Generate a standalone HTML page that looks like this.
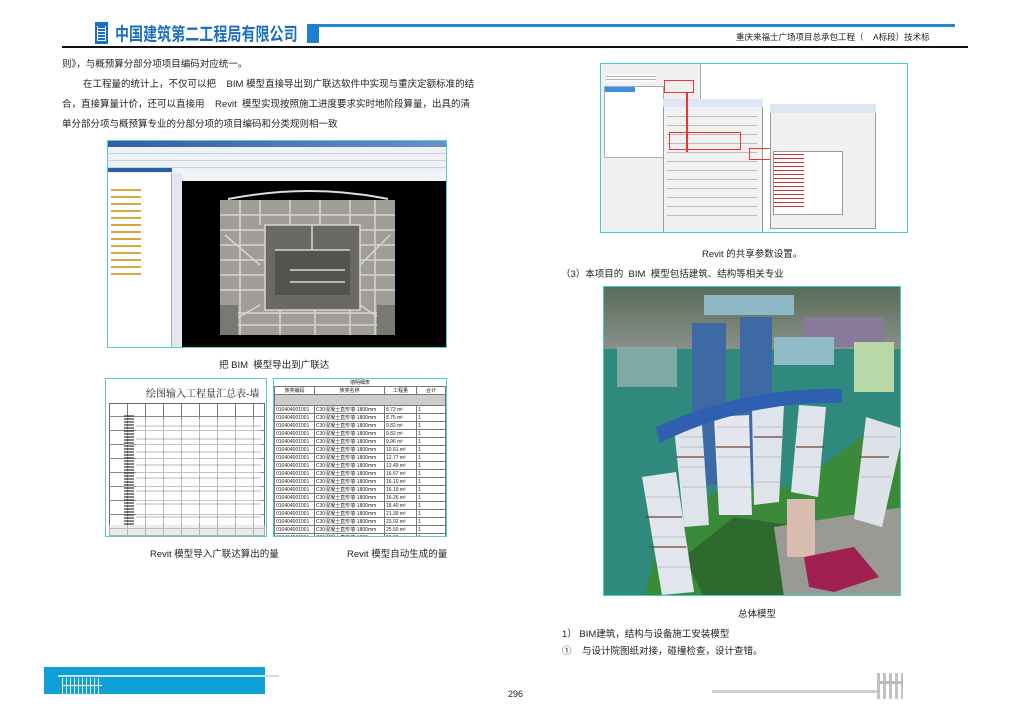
<!DOCTYPE html>
<html><head><meta charset="utf-8"><style>
*{margin:0;padding:0;box-sizing:border-box}
body{width:1024px;height:724px;background:#fff;position:relative;overflow:hidden;font-family:"Liberation Sans","Noto Sans CJK SC",sans-serif;color:#222}
.a{position:absolute}
.t{position:absolute;font-size:9.5px;white-space:nowrap;color:#222}
table{border-collapse:collapse;font-size:5px}
td{border:1px solid #777;height:7.6px;padding:0 1px;white-space:nowrap;overflow:hidden}
</style></head><body>
<!-- header -->
<div class="a" style="left:95px;top:22px;width:13px;height:22px;background:#1d6fbf"></div>
<div class="a" style="left:97px;top:26px;width:9px;height:15px;border:1px solid #fff;border-width:0 1px;background:repeating-linear-gradient(#1d6fbf 0 2px,#fff 2px 3px)"></div>
<div class="t" style="left:115px;top:24px;font-size:14px;font-weight:bold;color:#1d6fbf;letter-spacing:0.05px;transform:scaleY(1.3);transform-origin:0 50%">中国建筑第二工程局有限公司</div>
<div class="a" style="left:307px;top:24px;width:12px;height:19px;background:#1d7fd0"></div>
<div class="a" style="left:319px;top:24px;width:636px;height:3px;background:#1d8ad6"></div>
<div class="t" style="left:736px;top:31px;font-size:8.5px">重庆来福士广场项目总承包工程（&nbsp;&nbsp;&nbsp;&nbsp;A标段）技术标</div>
<div class="a" style="left:62px;top:46px;width:906px;height:1.5px;background:#111"></div>
<!-- left text -->
<div class="t" style="left:62px;top:56px">则》，与概预算分部分项项目编码对应统一。</div>
<div class="t" style="left:83px;top:76px">在工程量的统计上，不仅可以把&nbsp;&nbsp;&nbsp;&nbsp;BIM 模型直接导出到广联达软件中实现与重庆定额标准的结</div>
<div class="t" style="left:62px;top:96px">合，直接算量计价，还可以直接用&nbsp;&nbsp;&nbsp;&nbsp;Revit&nbsp;&nbsp;模型实现按照施工进度要求实时地阶段算量，出具的清</div>
<div class="t" style="left:62px;top:116px">单分部分项与概预算专业的分部分项的项目编码和分类规则相一致</div>
<!-- left screenshot -->
<div class="a" style="left:107px;top:140px;width:340px;height:208px;background:#f2f4f7;border:1px solid #5cc;overflow:hidden">
 <div class="a" style="left:0;top:0;width:340px;height:6px;background:linear-gradient(90deg,#2f5fa8,#6c8fc5)"></div>
 <div class="a" style="left:0;top:6px;width:340px;height:26px;background:repeating-linear-gradient(#eef1f6 0 6px,#c8d2e0 6px 7px)"></div>
 <div class="a" style="left:0;top:32px;width:64px;height:175px;background:#fff;border-right:1px solid #aab"></div>
 <div class="a" style="left:0;top:27px;width:64px;height:4px;background:#2a5ea8"></div>
 <div class="a" style="left:3px;top:45px;width:30px;height:90px;background:repeating-linear-gradient(#fff 0 3px,#d9a940 3px 5px,#fff 5px 7px)"></div>
 <div class="a" style="left:64px;top:32px;width:10px;height:175px;background:#e4e8ee"></div>
 <div class="a" style="left:74px;top:40px;width:266px;height:167px;background:#000"></div>
</div>
<svg class="a" style="left:220px;top:185px" width="180" height="160" viewBox="0 0 180 160">
 <polygon points="0,15 175,15 175,150 0,150" fill="#a09d96"/>
 <path d="M8 14 Q90 -2 168 14" fill="none" stroke="#ddd" stroke-width="2"/>
 <rect x="45" y="40" width="95" height="85" fill="#6b6964"/>
 <rect x="55" y="65" width="75" height="45" fill="#55534f"/>
 <g stroke="#d8d6d0" stroke-width="1.5" fill="none">
  <path d="M0 30H175M0 45H45M140 45H175M0 60H45M140 60H175M0 75H45M140 75H175M0 90H45M140 90H175M0 105H45M140 105H175M0 128H175M0 140H175"/>
  <path d="M20 15V150M40 15V40M70 15V40M100 15V40M130 15V40M155 15V150M60 125V150M95 125V150M130 125V150"/>
  <path d="M45 40V125H140V40ZM55 65H130M92 40V65M70 85H125M70 97H125"/>
  <path d="M5 50L40 80M170 50L140 80M5 140L40 120M170 140L140 120"/>
 </g>
 <rect x="0" y="120" width="18" height="30" fill="#7a7873"/><rect x="157" y="120" width="18" height="30" fill="#7a7873"/>
</svg>
<div class="t" style="left:219px;top:357px">把 BIM&nbsp;&nbsp;模型导出到广联达</div>
<!-- tables -->
<div class="a" style="left:105px;top:378px;width:162px;height:159px;border:1px solid #5cc;background:#fff;overflow:hidden">
 <div class="a" style="left:40px;top:6px;font-size:10px;font-family:'Liberation Serif','Noto Serif CJK SC',serif;white-space:nowrap">绘图输入工程量汇总表-墙</div>
 <div class="a" style="left:3px;top:24px;width:156px;height:133px;border:1px solid #666;background:repeating-linear-gradient(90deg,#fff 0 17px,#777 17px 18px)"></div>
 <div class="a" style="left:3px;top:24px;width:156px;height:133px;background:repeating-linear-gradient(#0000 0 13px,#888 13px 14px)"></div>
 <div class="a" style="left:18px;top:36px;width:10px;height:110px;background:repeating-linear-gradient(#333 0 2px,#fff 2px 3px);opacity:.6"></div>
 <div class="a" style="left:30px;top:40px;width:125px;height:105px;background:repeating-linear-gradient(#fff 0 6px,#bbb 6px 8px,#fff 8px 13px);opacity:.5"></div>
 <div class="a" style="left:3px;top:146px;width:156px;height:11px;background:#ddd;opacity:.6"></div>
</div>
<div class="a" style="left:273px;top:378px;width:174px;height:159px;border:1px solid #5cc;background:#fff;overflow:hidden">
<table style="width:172px">
<tr><td colspan="4" style="text-align:center;border:none">墙明细表</td></tr>
<tr><td style="width:40px;text-align:center">族类编码</td><td style="width:70px;text-align:center">族类名称</td><td style="width:32px;text-align:center">工程量</td><td style="text-align:center">合计</td></tr>
<tr><td colspan="4" style="background:#ccc;height:11px"></td></tr>
<tr><td>010404001001</td><td>C30混凝土直形墙-1800mm</td><td>8.72 m²</td><td>1</td></tr>
<tr><td>010404001001</td><td>C30混凝土直形墙-1800mm</td><td>8.75 m²</td><td>1</td></tr>
<tr><td>010404001001</td><td>C30混凝土直形墙-1800mm</td><td>9.82 m²</td><td>1</td></tr>
<tr><td>010404001001</td><td>C30混凝土直形墙-1800mm</td><td>9.82 m²</td><td>1</td></tr>
<tr><td>010404001001</td><td>C30混凝土直形墙-1800mm</td><td>9.96 m²</td><td>1</td></tr>
<tr><td>010404001001</td><td>C30混凝土直形墙-1800mm</td><td>10.61 m²</td><td>1</td></tr>
<tr><td>010404001001</td><td>C30混凝土直形墙-1800mm</td><td>12.77 m²</td><td>1</td></tr>
<tr><td>010404001001</td><td>C30混凝土直形墙-1800mm</td><td>13.49 m²</td><td>1</td></tr>
<tr><td>010404001001</td><td>C30混凝土直形墙-1800mm</td><td>16.67 m²</td><td>1</td></tr>
<tr><td>010404001001</td><td>C30混凝土直形墙-1800mm</td><td>16.10 m²</td><td>1</td></tr>
<tr><td>010404001001</td><td>C30混凝土直形墙-1800mm</td><td>16.19 m²</td><td>1</td></tr>
<tr><td>010404001001</td><td>C30混凝土直形墙-1800mm</td><td>16.26 m²</td><td>1</td></tr>
<tr><td>010404001001</td><td>C30混凝土直形墙-1800mm</td><td>18.40 m²</td><td>1</td></tr>
<tr><td>010404001001</td><td>C30混凝土直形墙-1800mm</td><td>21.39 m²</td><td>1</td></tr>
<tr><td>010404001001</td><td>C30混凝土直形墙-1800mm</td><td>23.02 m²</td><td>1</td></tr>
<tr><td>010404001001</td><td>C30混凝土直形墙-1800mm</td><td>25.50 m²</td><td>1</td></tr>
<tr><td>010404001001</td><td>C30混凝土直形墙-1800mm</td><td>20.60 m²</td><td>1</td></tr>
<tr><td>010404001001</td><td>C30混凝土直形墙-1800mm</td><td>12.47 m²</td><td>1</td></tr>
<tr><td>010404001001</td><td>C30混凝土直形墙-1800mm</td><td>26.37 m²</td><td>1</td></tr>
<tr><td>010404001001</td><td>C30混凝土直形墙-1800mm</td><td>27.59 m²</td><td>1</td></tr>
<tr style="background:#ccc"><td>总计：23</td><td></td><td>371.04 m²</td><td>23</td></tr>
</table></div>
<div class="t" style="left:150px;top:546px">Revit 模型导入广联达算出的量</div>
<div class="t" style="left:347px;top:546px">Revit 模型自动生成的量</div>
<!-- right dialog screenshot -->
<div class="a" style="left:600px;top:63px;width:308px;height:170px;border:1px solid #4cc;background:#fff;overflow:hidden">
 <div class="a" style="left:0;top:0;width:100px;height:170px;background:#f0f0f0;border-right:1px solid #aaa"></div>
 <div class="a" style="left:3px;top:22px;width:60px;height:72px;background:#fff;border:1px solid #aaa"></div>
 <div class="a" style="left:4px;top:23px;width:30px;height:5px;background:#3a8ee6"></div>
 <div class="a" style="left:5px;top:10px;width:50px;height:8px;background:repeating-linear-gradient(#fff 0 2px,#888 2px 3px);opacity:.6"></div>
 <div class="a" style="left:63px;top:16px;width:30px;height:13px;border:1.5px solid #e33"></div>
 <div class="a" style="left:62px;top:35px;width:100px;height:135px;background:#f0f0f0;border:1px solid #999"></div>
 <div class="a" style="left:62px;top:35px;width:100px;height:8px;background:#dde6f2"></div>
 <div class="a" style="left:66px;top:48px;width:90px;height:110px;background:repeating-linear-gradient(#f0f0f0 0 4px,#999 4px 5px,#f0f0f0 5px 9px);opacity:.6"></div>
 <div class="a" style="left:68px;top:68px;width:72px;height:18px;border:1.5px solid #e33"></div>
 <div class="a" style="left:148px;top:84px;width:30px;height:12px;border:1.5px solid #e33"></div>
 <div class="a" style="left:169px;top:40px;width:106px;height:125px;background:#f0f0f0;border:1px solid #999"></div>
 <div class="a" style="left:169px;top:40px;width:106px;height:9px;background:#dde6f2"></div>
 <div class="a" style="left:172px;top:87px;width:70px;height:64px;background:#fff;border:1px solid #999"></div>
 <div class="a" style="left:173px;top:88px;width:30px;height:55px;background:repeating-linear-gradient(#fff 0 2px,#c33 2px 3px,#fff 3px 4px)"></div>
 <div class="a" style="left:85px;top:28px;width:1.5px;height:60px;background:#e33"></div>
</div>
<div class="t" style="left:702px;top:246px">Revit 的共享参数设置。</div>
<div class="t" style="left:561px;top:266px">（3）本项目的&nbsp;&nbsp;BIM&nbsp;&nbsp;模型包括建筑、结构等相关专业</div>
<!-- model -->
<div class="a" style="left:603px;top:286px;width:298px;height:310px;border:1px solid #4cc;overflow:hidden;background:#2f8a7d">
 <div class="a" style="left:0;top:0;width:298px;height:62px;background:linear-gradient(#5a6b58,#8a918a)"></div>
 <div class="a" style="left:100px;top:8px;width:90px;height:20px;background:#8fb8c6"></div>
 <div class="a" style="left:200px;top:30px;width:80px;height:30px;background:#887a9a"></div>
 <div class="a" style="left:170px;top:50px;width:60px;height:28px;background:#8fbcc6"></div>
 <div class="a" style="left:250px;top:55px;width:40px;height:50px;background:#b8d8a8"></div>
 <div class="a" style="left:13px;top:60px;width:60px;height:40px;background:#93b0ad;opacity:.8"></div>
 <svg class="a" style="left:0;top:0" width="298" height="310" viewBox="0 0 298 310">
  <path d="M40 310 L60 240 L120 200 L190 200 L270 140 L298 150 L298 310Z" fill="#3a8a3a"/>
  <path d="M100 310 L80 270 L130 230 L200 240 L230 310Z" fill="#2e6a2e"/>
  <path d="M170 240 L300 220 L300 310 L180 310Z" fill="#9a9a95"/>
  <rect x="183" y="212" width="28" height="58" fill="#d8bcb0"/>
  <path d="M200 270 L250 260 L275 290 L230 305 L205 300Z" fill="#a02050"/>
  <rect x="88" y="36" width="34" height="162" fill="#3d6aa5"/>
  <rect x="136" y="30" width="32" height="168" fill="#3d6aa5"/>
  <path d="M70 140 L98 138 L105 238 L80 240Z" fill="#dfe3ea"/>
  <path d="M110 130 L145 128 L148 228 L115 228Z" fill="#e4e7ee"/>
  <path d="M148 122 L180 118 L175 215 L150 218Z" fill="#dfe3ea"/>
  <path d="M195 118 L222 120 L214 210 L187 205Z" fill="#dfe3ea"/>
  <path d="M262 130 L300 142 L278 240 L250 232Z" fill="#dde1e8"/>
  <path d="M38 190 L72 185 L90 305 L58 308Z" fill="#e2e5ec"/>
  <g fill="none" stroke="#556" stroke-width="0.6" opacity=".5"><path d="M75 150H100M76 160H100M77 180H102M78 200H103M113 140H146M113 170H147M114 200H147M152 140H178M151 170H177M151 195H176M193 140H220M191 180H217M260 150H292M257 190H287M42 210H76M45 250H82M48 280H86"/></g>
  <path d="M52 140 Q140 100 238 102 L238 116 Q140 114 56 156Z" fill="#2f5fb0"/>
  <g stroke="#6a3c2c" stroke-width="2" opacity=".6"><path d="M72 170H100M112 160H146M150 150H178M192 160H220M255 170H285M42 230H78M45 260H82"/></g>
 </svg>
</div>
<div class="t" style="left:738px;top:606px">总体模型</div>
<div class="t" style="left:562px;top:626px">1）&nbsp;BIM建筑，结构与设备施工安装模型</div>
<div class="t" style="left:562px;top:643px">①&nbsp;&nbsp;&nbsp;&nbsp;与设计院图纸对接，碰撞检查，设计查错。</div>
<!-- footer -->
<div class="a" style="left:44px;top:667px;width:221px;height:27px;background:#0fa0d8"></div>
<div class="a" style="left:58px;top:675px;width:221px;height:2px;background:#c4e6f4"></div>
<div class="a" style="left:62px;top:678px;width:40px;height:16px;background:repeating-linear-gradient(90deg,#fff 0 1px,#0fa0d8 1px 4px);opacity:.9"></div>
<div class="a" style="left:62px;top:685px;width:40px;height:1px;background:#fff"></div>
<div class="t" style="left:508px;top:689px;font-size:9px">296</div>
<div class="a" style="left:712px;top:690px;width:170px;height:3px;background:#ccc"></div>
<div class="a" style="left:877px;top:673px;width:26px;height:26px;background:repeating-linear-gradient(90deg,#bbb 0 3px,#fff 3px 6px);opacity:.9"></div>
<div class="a" style="left:877px;top:681px;width:26px;height:3px;background:#bbb"></div>
</body></html>
